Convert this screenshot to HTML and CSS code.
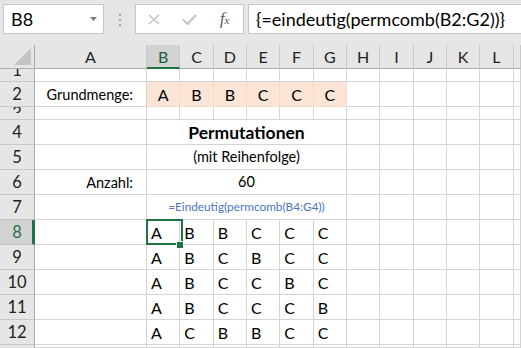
FILE: index.html
```html
<!DOCTYPE html>
<html lang="de">
    <head>
        <meta charset="utf-8" />
        <title>Permutationen</title>
        <link rel="stylesheet" href="styles.css">
    </head>
    <body>
        <!-- name box and formula bar -->
        <div class="toolbar">
            <div class="namebox">
                <span>B8</span>
                <svg class="drop" width="7" height="4" viewBox="0 0 7 4"><polygon points="0,0 7,0 3.5,4" fill="#7a7a7a"/></svg>
            </div>
            <div class="dots"><i></i><i></i><i></i></div>
            <div class="fxbox">
                <svg width="12" height="11" viewBox="0 0 12 11"><path d="M1 1 L11 10 M11 1 L1 10" stroke="#c3c3c3" stroke-width="1.6" fill="none"/></svg>
                <svg width="15" height="11" viewBox="0 0 15 11"><path d="M1 5.5 L5.5 10 L14 1" stroke="#c3c3c3" stroke-width="2" fill="none"/></svg>
                <span class="fx">f<sub>x</sub></span>
            </div>
            <div class="formula">{=eindeutig(permcomb(B2:G2))}</div>
        </div>

        <!-- worksheet -->
        <div class="sheet">
            <div class="corner"><svg width="17" height="17" viewBox="0 0 17 17"><polygon points="17,0 17,17 0,17" fill="#c4c4c4"/></svg></div>
            <div class="ch">A</div><div class="ch sel">B</div><div class="ch">C</div><div class="ch">D</div><div class="ch">E</div><div class="ch">F</div><div class="ch">G</div><div class="ch">H</div><div class="ch">I</div><div class="ch">J</div><div class="ch">K</div><div class="ch">L</div><div class="ch"></div>

            <div class="rh low"><span>1</span></div>
            <div class="c"></div><div class="c"></div><div class="c"></div><div class="c"></div><div class="c"></div><div class="c"></div><div class="c"></div><div class="c"></div><div class="c"></div><div class="c"></div><div class="c"></div><div class="c"></div><div class="c"></div>

            <div class="rh">2</div>
            <div class="c label">Grundmenge:</div>
            <div class="c fill">A</div><div class="c fill">B</div><div class="c fill">B</div><div class="c fill">C</div><div class="c fill">C</div><div class="c fill">C</div>
            <div class="c"></div><div class="c"></div><div class="c"></div><div class="c"></div><div class="c"></div><div class="c"></div>

            <div class="rh high"><span>3</span></div>
            <div class="c"></div><div class="c"></div><div class="c"></div><div class="c"></div><div class="c"></div><div class="c"></div><div class="c"></div><div class="c"></div><div class="c"></div><div class="c"></div><div class="c"></div><div class="c"></div><div class="c"></div>

            <div class="rh">4</div>
            <div class="c"></div>
            <div class="c merged title">Permutationen</div>
            <div class="c"></div><div class="c"></div><div class="c"></div><div class="c"></div><div class="c"></div><div class="c"></div>

            <div class="rh">5</div>
            <div class="c"></div>
            <div class="c merged">(mit Reihenfolge)</div>
            <div class="c"></div><div class="c"></div><div class="c"></div><div class="c"></div><div class="c"></div><div class="c"></div>

            <div class="rh">6</div>
            <div class="c label">Anzahl:</div>
            <div class="c merged">60</div>
            <div class="c"></div><div class="c"></div><div class="c"></div><div class="c"></div><div class="c"></div><div class="c"></div>

            <div class="rh">7</div>
            <div class="c"></div>
            <div class="c merged note">=Eindeutig(permcomb(B4:G4))</div>
            <div class="c"></div><div class="c"></div><div class="c"></div><div class="c"></div><div class="c"></div><div class="c"></div>

            <div class="rh sel">8</div>
            <div class="c"></div>
            <div class="c v active">A</div><div class="c v">B</div><div class="c v">B</div><div class="c v">C</div><div class="c v">C</div><div class="c v">C</div>
            <div class="c"></div><div class="c"></div><div class="c"></div><div class="c"></div><div class="c"></div><div class="c"></div>

            <div class="rh">9</div>
            <div class="c"></div>
            <div class="c v">A</div><div class="c v">B</div><div class="c v">C</div><div class="c v">B</div><div class="c v">C</div><div class="c v">C</div>
            <div class="c"></div><div class="c"></div><div class="c"></div><div class="c"></div><div class="c"></div><div class="c"></div>

            <div class="rh">10</div>
            <div class="c"></div>
            <div class="c v">A</div><div class="c v">B</div><div class="c v">C</div><div class="c v">C</div><div class="c v">B</div><div class="c v">C</div>
            <div class="c"></div><div class="c"></div><div class="c"></div><div class="c"></div><div class="c"></div><div class="c"></div>

            <div class="rh">11</div>
            <div class="c"></div>
            <div class="c v">A</div><div class="c v">B</div><div class="c v">C</div><div class="c v">C</div><div class="c v">C</div><div class="c v">B</div>
            <div class="c"></div><div class="c"></div><div class="c"></div><div class="c"></div><div class="c"></div><div class="c"></div>

            <div class="rh">12</div>
            <div class="c"></div>
            <div class="c v">A</div><div class="c v">C</div><div class="c v">B</div><div class="c v">B</div><div class="c v">C</div><div class="c v">C</div>
            <div class="c"></div><div class="c"></div><div class="c"></div><div class="c"></div><div class="c"></div><div class="c"></div>

            <div class="rh blank"></div>
            <div class="c"></div><div class="c"></div><div class="c"></div><div class="c"></div><div class="c"></div><div class="c"></div><div class="c"></div><div class="c"></div><div class="c"></div><div class="c"></div><div class="c"></div><div class="c"></div><div class="c"></div>
        </div>
    </body>
</html>
```

FILE: styles.css
```css
/* page */
body {
    margin: 0;
    font-family: Lato, "Open Sans", sans-serif;
    color: #000;
    background: #fff;
    overflow: hidden;
}

/* toolbar with name box and formula bar */
.toolbar {
    display: flex;
    align-items: flex-start;
    height: 45px;
    box-sizing: border-box;
    padding: 4px 0 0 3px;
    background: #e6e6e6;
}

.namebox {
    width: 101px;
    height: 30px;
    box-sizing: border-box;
    border: 1px solid #c6c6c6;
    background: #fff;
    display: flex;
    align-items: center;
    justify-content: space-between;
    padding: 0 6px 0 7px;
    font-size: 18px;
}

.dots {
    display: flex;
    flex-direction: column;
    gap: 3px;
    margin: 10px 14px 0 15px;
}

.dots i {
    display: block;
    width: 2px;
    height: 2px;
    background: #a8a8a8;
}

.fxbox {
    width: 109px;
    height: 30px;
    box-sizing: border-box;
    border: 1px solid #c6c6c6;
    background: #fff;
    display: flex;
    align-items: center;
    padding: 0 0 0 12px;
    gap: 22px;
}

.fx {
    font-family: "Liberation Serif", serif;
    font-style: italic;
    font-size: 16px;
    color: #555;
    margin-left: 1px;
}

.fx sub {
    font-size: 11px;
    vertical-align: 0;
}

.formula {
    flex: 1;
    height: 30px;
    box-sizing: border-box;
    margin-left: 4px;
    border: 1px solid #c6c6c6;
    border-right: none;
    background: #fff;
    padding: 0 0 0 7px;
    font-size: 18px;
    line-height: 28px;
}

/* worksheet grid */
.sheet {
    display: grid;
    grid-template-columns: 35px 112px repeat(11, 33.33px) 1fr;
    grid-template-rows: 24px 13px 25px 13px repeat(9, 25px) 3px;
}

.sheet > div {
    box-sizing: border-box;
    overflow: hidden;
    white-space: nowrap;
}

.corner {
    background: #e6e6e6;
    border-right: 1px solid #ababab;
    border-bottom: 1px solid #ababab;
    display: flex;
    align-items: flex-end;
    justify-content: flex-end;
    padding: 0 3px 3px 0;
}

.ch {
    background: #e6e6e6;
    border-right: 1px solid #c8c8c8;
    border-bottom: 1px solid #ababab;
    text-align: center;
    font-size: 16px;
    line-height: 23px;
    color: #222;
}

.ch.sel {
    background: #d2d2d2;
    border-bottom: 2px solid #217346;
    color: #1e5c3a;
}

.rh {
    background: #e6e6e6;
    border-right: 1px solid #ababab;
    border-bottom: 1px solid #c8c8c8;
    text-align: center;
    font-size: 16.5px;
    line-height: 24px;
    color: #222;
}

.rh.sel {
    background: #d2d2d2;
    border-right: 3px solid #217346;
    color: #217346;
    padding-left: 2px;
}

.rh.blank {
    border-bottom: none;
}

/* short rows 1 and 3 only show part of their number */
.rh.low span {
    display: block;
    line-height: 3px;
}

.rh.high span {
    display: block;
    height: 6px;
    overflow: hidden;
    line-height: 13px;
}

.c {
    border-right: 1px solid #d4d4d4;
    border-bottom: 1px solid #d4d4d4;
    font-size: 14.5px;
    line-height: 24px;
}

.label {
    text-align: right;
    padding-right: 13px;
    padding-top: 1px;
}

.fill {
    background: #fce4d6;
    border-color: #f4dccd;
    text-align: center;
    font-size: 16px;
    padding-top: 1px;
}

.merged {
    grid-column: span 6;
    text-align: center;
}

.title {
    font-weight: bold;
    font-size: 17.5px;
    line-height: 26px;
}

.note {
    color: #4a78c2;
    font-size: 11.8px;
}

.v {
    font-size: 16px;
    padding-left: 4px;
    line-height: 26px;
}

/* active cell B8 with fill handle */
.active {
    position: relative;
    overflow: visible !important;
}

.active::before {
    content: "";
    position: absolute;
    left: -1px;
    top: -1px;
    width: 37px;
    height: 26px;
    box-sizing: border-box;
    border: 2px solid #217346;
}

.active::after {
    content: "";
    position: absolute;
    left: 30px;
    top: 22px;
    width: 6px;
    height: 6px;
    background: #217346;
    outline: 1px solid #fff;
}
```
